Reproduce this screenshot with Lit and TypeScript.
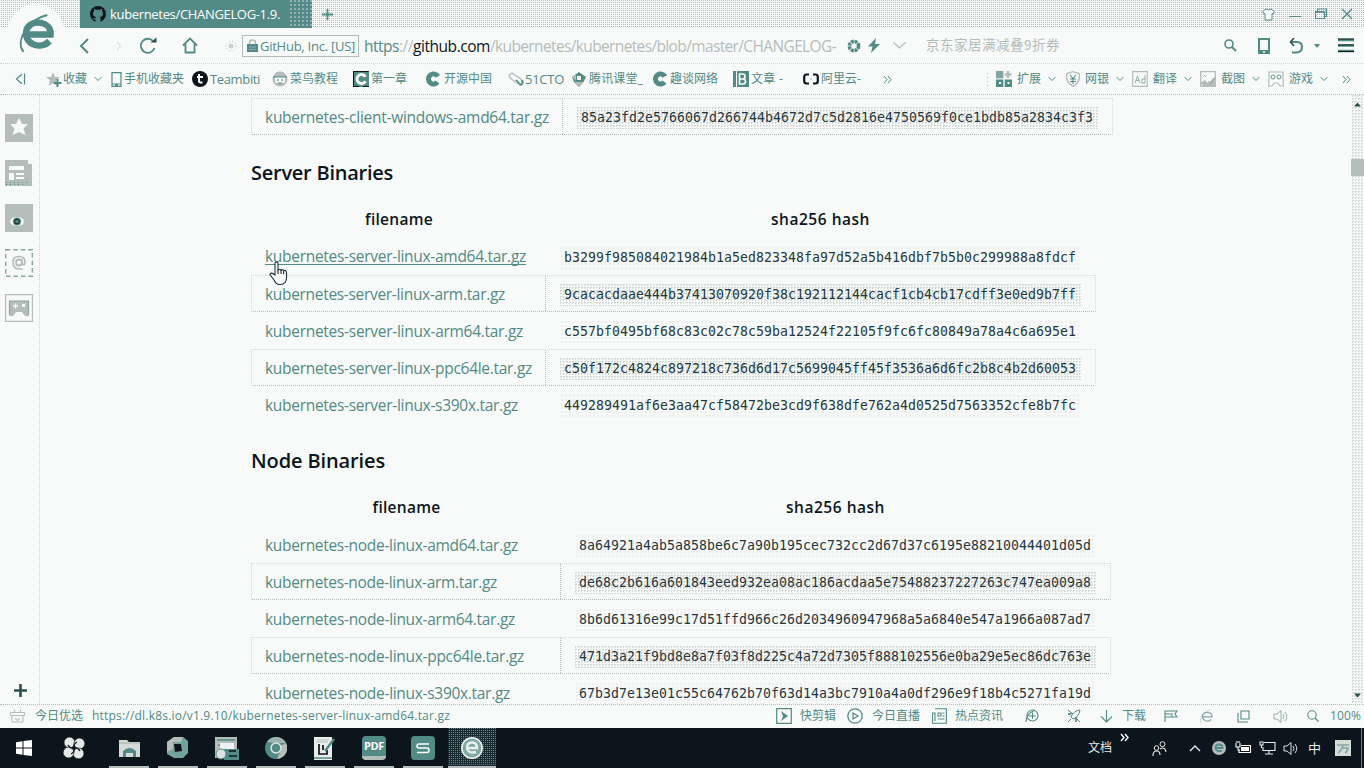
import { LitElement, html, css, svg, unsafeCSS, TemplateResult } from "lit";
import { customElement, property } from "lit/decorators.js";

const BG = "#f8faf9";
const G = "#b5bdba";
const T = "#528a85";
const D = "#0c151c";

/* Turns a list of x edges into grid tracks, the last edge being 1364. */
const tracks = (edges: number[]) =>
  unsafeCSS([...edges, 1364].slice(1).map((e, i) => `${e - edges[i]}px`).join(" "));

const icon = (w: number, h: number, body: unknown) =>
  html`<svg width=${w} height=${h} viewBox="0 0 ${w} ${h}" fill="none">${body}</svg>`;

const line = (d: string, c = T, w = 1.5) => svg`<path d=${d} stroke=${c} stroke-width=${w}></path>`;
const fill = (d: string, c = T) => svg`<path d=${d} fill=${c}></path>`;
const fit = (w: number, text: string, cls = "") => html`<fit-text class=${cls} .w=${w} .text=${text}></fit-text>`;

/* A single line of text whose tracking is adjusted to a given width. */
@customElement("fit-text")
class FitText extends LitElement {
  @property({ type: Number }) w = 0;
  @property() text = "";
  static styles = css`
    :host { display: inline-block; white-space: pre; justify-self: start; }
  `;
  firstUpdated() {
    const run = this.renderRoot.querySelector("span")!;
    const natural = run.getBoundingClientRect().width;
    run.style.letterSpacing = `${(this.w - natural) / this.text.length}px`;
  }
  render() {
    return html`<span>${this.text}</span>`;
  }
}

const chev = icon(8, 6, line("M.5 1 4 4.5 7.5 1", T, 1));
const more = (c = T, w = 1) => icon(9, 9, line("M1 1 4 4.5 1 8M5 1 8 4.5 5 8", c, w));
const eLogo = (s: number, c = T, stroke = 5) => html`<svg width=${s} height=${s} viewBox="0 0 36 36" fill="none">
  <path d="M7 19H31C32 7 14 4 9 14C5 27 21 34 30 25" stroke=${c} stroke-width=${stroke}></path>
  <path d="M28 1C10 5-2 25 6 35" stroke=${c} stroke-width=${stroke / 3.2}></path></svg>`;
const speaker = (c: string) => icon(16, 15, svg`${line("M1 5H4L8 1.5V13.5L4 10H1Z", c, 1)}${line("M10 5Q12 7.5 10 10M12 3Q15.5 7.5 12 12", c, 1)}`);
const cIcon = icon(16, 16, svg`<circle cx="7.5" cy="8" r="5" stroke=${T} stroke-width="5" stroke-dasharray="25 6.4" transform="rotate(37 7.5 8)"></circle>`);

const server: [number, string, string][] = [
  [261, "kubernetes-server-linux-amd64.tar.gz", "b3299f985084021984b1a5ed823348fa97d52a5b416dbf7b5b0c299988a8fdcf"],
  [240, "kubernetes-server-linux-arm.tar.gz", "9cacacdaae444b37413070920f38c192112144cacf1cb4cb17cdff3e0ed9b7ff"],
  [258, "kubernetes-server-linux-arm64.tar.gz", "c557bf0495bf68c83c02c78c59ba12524f22105f9fc6fc80849a78a4c6a695e1"],
  [267, "kubernetes-server-linux-ppc64le.tar.gz", "c50f172c4824c897218c736d6d17c5699045ff45f3536a6d6fc2b8c4b2d60053"],
  [253, "kubernetes-server-linux-s390x.tar.gz", "449289491af6e3aa47cf58472be3cd9f638dfe762a4d0525d7563352cfe8b7fc"],
];
const node: [number, string, string][] = [
  [253, "kubernetes-node-linux-amd64.tar.gz", "8a64921a4ab5a858be6c7a90b195cec732cc2d67d37c6195e88210044401d05d"],
  [232, "kubernetes-node-linux-arm.tar.gz", "de68c2b616a601843eed932ea08ac186acdaa5e75488237227263c747ea009a8"],
  [250, "kubernetes-node-linux-arm64.tar.gz", "8b6d61316e99c17d51ffd966c26d2034960947968a5a6840e547a1966a087ad7"],
  [259, "kubernetes-node-linux-ppc64le.tar.gz", "471d3a21f9bd8e8a7f03f8d225c4a72d7305f888102556e0ba29e5ec86dc763e"],
  [245, "kubernetes-node-linux-s390x.tar.gz", "67b3d7e13e01c55c64762b70f63d14a3bc7910a4a0df296e9f18b4c5271fa19d"],
];

@customElement("app-root")
class AppRoot extends LitElement {
  static styles = css`
    :host { display: grid; grid-template-rows: 28px 36px 31px 609px 24px 40px; width: 1364px; height: 768px;
      position: relative; overflow: hidden; background: ${unsafeCSS(BG)}; color: ${unsafeCSS(T)};
      font: 12px/16px "Open Sans", "Noto Sans CJK SC", sans-serif; }
    * { box-sizing: border-box; }
    svg { display: block; flex: none; }
    .grid { display: grid; align-items: center; min-width: 0; }
    .grid > * { min-width: 0; }
    .grey { color: ${unsafeCSS(G)}; }
    .dark { color: ${unsafeCSS(D)}; }
    .cjk { font-family: "Noto Sans CJK SC", sans-serif; }

    .title { grid-template-columns: ${tracks([0, 80, 322, 1262, 1289, 1315, 1341])};
      background: conic-gradient(${unsafeCSS(G)} 25%, transparent 0) 0 0 / 2px 2px; }
    .tab { width: 232px; height: 28px; display: flex; align-items: center; gap: 4px; padding-left: 10px;
      background: ${unsafeCSS(T)}; color: #fff; }
    .tab-end { width: 24px; height: 28px; margin-left: auto;
      background: conic-gradient(#93b0ac 25%, transparent 0) 0 0 / 4px 4px; }
    .tab fit-text { font-size: 13px; margin-top: -1px; }
    .logo { position: absolute; left: 7px; top: 4px; width: 58px; height: 58px; border-radius: 50%;
      background: ${unsafeCSS(BG)}; display: grid; place-items: center; }

    .nav { grid-template-columns: ${tracks([0, 79, 116, 140, 182, 225, 242, 364, 847, 868, 893, 926, 1224, 1258, 1289, 1314, 1338])};
      border-bottom: 1px dotted #cdd3d1; }
    .cert { width: 117px; height: 22px; border: 1px solid ${unsafeCSS(G)}; display: flex; align-items: center;
      padding-left: 4px; gap: 2px; font-size: 13px; }
    .url { display: flex; font-size: 15.5px; line-height: 22px; }
    .hint { font-size: 13.5px; margin-top: -3px; }

    .marks { grid-template-columns: ${tracks([0, 15, 46, 63, 94, 111, 124, 192, 210, 272, 290, 353, 371, 426, 444, 508, 525, 572, 589, 653, 670, 733, 751, 803, 821, 883, 986, 996, 1017, 1048, 1065, 1085, 1116, 1132, 1153, 1184, 1200, 1221, 1252, 1268, 1289, 1320, 1342])};
      border-bottom: 1px dotted ${unsafeCSS(G)}; }
    .latin { font-size: 13px; }

    .body { display: grid; grid-template-columns: 40px 1311px 13px; min-height: 0; overflow: hidden; }
    .side { border-right: 1px dotted #cdd3d1; padding: 19px 0 7px 5px; display: flex; flex-direction: column; gap: 17px; }
    .side .add { margin: auto 0 0 9px; }
    .scroll { display: flex; flex-direction: column; align-items: center; padding: 7px 0 6px;
      background: conic-gradient(#d5dad8 25%, transparent 0) 0 0 / 3px 3px; }
    .thumb { width: 13px; height: 17px; margin-top: 52px; background: ${unsafeCSS(G)}; }
    .scroll .down { margin-top: auto; }

    .doc { overflow: hidden; padding: 3px 0 0 211px; min-height: 0; }
    .row { display: grid; height: 37px; align-items: center; border: 1px solid transparent; }
    .row.c { grid-template-columns: 311px 548px; width: 862px; }
    .row.s { grid-template-columns: 294px 549px; width: 845px; }
    .row.n { grid-template-columns: 309px 549px; width: 860px; }
    .row.alt { border: 1px dotted ${unsafeCSS(G)}; border-top-color: #d3d8d6; border-left-color: #d3d8d6; border-right-color: #d3d8d6; }
    .row > div { height: 35px; display: flex; align-items: center; }
    .name { padding-left: 13px; }
    .alt .name { border-right: 1px dotted ${unsafeCSS(G)}; }
    .name fit-text { font-size: 15.5px; line-height: 20px; }
    .hover fit-text { border-bottom: 1px solid ${unsafeCSS(T)}; line-height: 15px; height: 16px; margin-top: 1px; }
    .row > .hash { padding: 2px 0 0 13px; }
    code { font: 13.2px/22px "DejaVu Sans Mono", monospace; color: #24383e; height: 22px; padding: 0 5px;
      background: conic-gradient(#eceFed 25%, transparent 0) 0 0 / 4px 4px; }
    .alt code { background: conic-gradient(#d3d9d6 25%, transparent 0) 0 0 / 3px 3px; }
    h3 { margin: 0; height: 66px; padding-top: 25px; font-size: 20px; line-height: 26px; font-weight: 600; color: ${unsafeCSS(D)}; }
    .row > .th { justify-content: center; padding-bottom: 2px; font-size: 15.5px; font-weight: 600; color: ${unsafeCSS(D)}; }
    .cursor { position: absolute; left: 269px; top: 260px; }

    .status { grid-template-columns: ${tracks([0, 10, 35, 92, 776, 800, 847, 872, 932, 955, 1025, 1067, 1100, 1122, 1164, 1199, 1237, 1273, 1307, 1330])};
      border-top: 1px dotted ${unsafeCSS(G)}; padding-bottom: 1px; }
    .task { grid-template-columns: ${tracks([0, 16, 63, 109, 158, 207, 256, 305, 354, 403, 448, 1088, 1120, 1152, 1189, 1212, 1235, 1259, 1283, 1308, 1335, 1361])};
      background: ${unsafeCSS(D)}; color: #e6eceb; }
    .app { width: 40px; height: 40px; display: grid; place-items: center; border-bottom: 2px solid ${unsafeCSS(G)}; padding-top: 2px; }
    .app.on { width: 48px; background: conic-gradient(${unsafeCSS(T)} 25%, #182b31 0) 0 0 / 2px 2px; }
    .badge { width: 24px; height: 24px; border-radius: 4px; background: ${unsafeCSS(T)}; color: #fff; display: grid;
      place-items: center; font: 700 11px/20px "Open Sans", sans-serif; letter-spacing: -.3px; border-bottom: 4px solid ${unsafeCSS(G)}; }
    .raise { align-self: start; margin-top: 5px; }
    .ime { font-size: 13px; }
    .end { width: 1px; height: 40px; background: ${unsafeCSS(T)}; }
  `;

  private table(kind: string, rows: [number, string, string][]): TemplateResult {
    return html`
      <div class="row ${kind}">
        <div class="th">${fit(68, "filename")}</div>
        <div class="th">${fit(99, "sha256 hash")}</div>
      </div>
      ${rows.map((r, i) => this.row(kind, r, i % 2 === 1, kind === "s" && i === 0))}`;
  }

  private row(kind: string, [w, name, hash]: [number, string, string], alt: boolean, hover = false) {
    return html`<div class="row ${kind} ${alt ? "alt" : ""}">
      <div class="name ${hover ? "hover" : ""}">${fit(w, name)}</div>
      <div class="hash"><code>${fit(512, hash)}</code></div>
    </div>`;
  }

  render() {
    return html`
      <div class="grid title">
        <span></span>
        <div class="tab">
          ${icon(16, 16, svg`<circle cx="8" cy="8" r="8" fill=${D}></circle>${fill("M5.5 16V13.5Q2.5 14 2.5 11.5Q4 13 5.5 12L6 11Q3 10.5 3 7.5Q3 6 4 5V2.7L6 3.8H10L12 2.7V5Q13 6 13 7.5Q13 10.5 10 11L10.5 12.5V16Z", T)}`)}
          ${fit(170, "kubernetes/CHANGELOG-1.9.")}
          <div class="tab-end"></div>
        </div>
        ${icon(11, 11, line("M5.5 0V11M0 5.5H11", T, 1.8))}
        ${icon(13, 13, svg`<path d="M4 1Q6.5 3 9 1L12.5 3.5 11 6 10 5.5V12H3V5.5L2 6 .5 3.5Z" fill=${BG} stroke=${T}></path>`)}
        ${icon(12, 12, line("M0 8.5H12", T, 1))}
        ${icon(12, 12, svg`${line("M.5 4H9.5V10.5H.5ZM2.5 3.5V1H11.5V8.5H10", T, 1.2)}${line("M0 4H10", T, 1.6)}`)}
        ${icon(12, 12, line("M1 1 11 11M11 1 1 11", T, 1.3))}
      </div>

      <div class="grid nav">
        <span></span>
        ${icon(10, 16, line("M9 1 2 8 9 15", T, 2))}
        ${icon(6, 10, line("M1 1 4.5 5 1 9", "#cfd5d3", 1))}
        ${icon(17, 17, svg`${line("M14.5 11A7 7 0 1 1 13 4", T, 1.8)}${fill("M10.5 5.5H16.5V.5Z", "#2c5052")}`)}
        ${icon(16, 17, line("M1 8.5 8 1.5 15 8.5M3.5 7V15.5H12.5V7", T, 1.8))}
        ${icon(12, 12, svg`<circle cx="6" cy="6" r="2.5" fill="#cdd3d1"></circle><circle cx="6" cy="6" r="5" stroke=${G} stroke-dasharray="1 2"></circle>`)}
        <div class="cert">
          ${icon(11, 13, svg`${line("M2.5 6V3.5Q2.5 1 5.5 1T8.5 3.5V6", G, 1.6)}${fill("M0 5H11V13H0Z")}${line("M2 8H9M2 10.5H9", "#8db0ac", 1)}`)}
          ${fit(95, "GitHub, Inc. [US]")}
        </div>
        <div class="url">
          ${fit(35, "https")}${fit(14, "://", "grey")}${fit(77, "github.com", "dark")}${fit(346, "/kubernetes/kubernetes/blob/master/CHANGELOG-", "grey")}
        </div>
        ${icon(14, 14, svg`<circle cx="7" cy="7" r="4.6" stroke=${T} stroke-width="3.6" stroke-dasharray="2.9 .71"></circle>`)}
        ${icon(12, 15, fill("M8 0 0 8.5H4.5L3 15 12 6H7Z"))}
        ${icon(13, 7, line("M.5 .5 6.5 6 12.5 .5", G, 1.2))}
        ${fit(134, "京东家居满减叠9折券", "hint grey cjk")}
        ${icon(13, 13, svg`<circle cx="5" cy="5" r="4" stroke=${T} stroke-width="1.6"></circle>${line("M8 8 12 12", T, 2)}`)}
        ${icon(12, 16, svg`<path fill-rule="evenodd" d="M0 0H12V16H0ZM2 2V12H10V2ZM5 13.3V14.7H7V13.3Z" fill=${T}></path>`)}
        ${icon(15, 16, svg`${line("M2 4H8Q13 4 13 9T8 14.5H3", T, 2)}${line("M5 0 1.5 4 5 8", "#2c5052", 1.6)}`)}
        ${icon(6, 4, fill("M0 0H6L3 4Z"))}
        ${icon(16, 15, svg`${line("M0 2H16M0 7.5H16M0 13H16", T, 2.6)}${line("M0 1H16M0 7H16M0 13.5H16", D, 1)}`)}
      </div>
      <div class="logo">${eLogo(39, T, 6)}</div>

      <div class="grid marks">
        <span></span>
        ${icon(11, 12, line("M7 1 1.5 6 7 11M9.5 .5V11.5", T, 1.2))}
        ${icon(16, 15, svg`${fill("M7 0 9 5H14L10 8.5 11.5 14 7 11 2.5 14 4 8.5 0 5H5Z", G)}${line("M11.5 7V15M7.5 11H15.5", T, 2)}`)}
        ${fit(24, "收藏")} ${chev}
        ${icon(11, 15, svg`${line("M1 .7H10V14.3H1Z", T, 1.2)}${line("M1 12H10", T, 1)}${fill("M4 12H7V14H4Z")}`)}
        ${fit(60, "手机收藏夹")}
        ${icon(16, 16, svg`<circle cx="8" cy="8" r="8" fill=${D}></circle>${line("M7 3V10Q7 12 10.5 11.5M5 6H11", BG, 2)}`)}
        ${fit(50, "Teambiti", "latin")}
        ${icon(16, 16, svg`<circle cx="8" cy="8" r="7.5" fill=${G}></circle>${fill("M3 6H13V12H3Z", BG)}${line("M1 6H15M5 9H7M9 9H11M6 12H10", T, 1.2)}`)}
        ${fit(48, "菜鸟教程")}
        ${icon(16, 16, svg`${fill("M0 0H16V16H0Z")}<circle cx="8.5" cy="8" r="4.5" stroke=${BG} stroke-width="3" stroke-dasharray="23 5.3" transform="rotate(30 8.5 8)"></circle>${line("M.5 .5H15.5M.5 0V16M1 15.5H6M10 15.5H16", D, 1)}`)}
        ${fit(36, "第一章")}
        ${cIcon} ${fit(48, "开源中国")}
        ${icon(16, 15, svg`${line("M1 3 4 1 13 7Q15 11 12 13L2 6Z", G, 1.3)}${line("M8 8 13 13Q16 11 14 8", T, 1.6)}`)}
        ${fit(39, "51CTO", "latin")}
        ${icon(14, 15, svg`${fill("M7 0 14 5 12 9 7 15 2 10 0 5Z")}${fill("M0 5 4 2V9ZM2 10H12L7 15Z", G)}${fill("M5 4H9V8H5Z", BG)}`)}
        ${fit(54, "腾讯课堂_")}
        ${cIcon} ${fit(48, "趣谈网络")}
        ${icon(16, 16, svg`${fill("M0 0H16V16H0Z")}${line("M3.5 0V16", BG, 1)}${line("M6.5 3H10Q12 3 12 5.5T10 8Q12.5 8 12.5 10.5T10 13H6.5ZM6.5 8H10", BG, 1.7)}`)}
        ${fit(32, "文章 -")}
        ${icon(16, 12, svg`${line("M6 1.5H3.5Q1.2 1.5 1.2 4V8Q1.2 10.5 3.5 10.5H6M10 1.5H12.5Q14.8 1.5 14.8 4V8Q14.8 10.5 12.5 10.5H10", D, 2.2)}${line("M7 6H9", G, 1)}`)}
        ${fit(40, "阿里云-")}
        ${more()}
        ${icon(3, 15, svg`<path d="M1.5 1V14" stroke=${G} stroke-dasharray="1 3"></path>`)}
        ${icon(16, 16, svg`${fill("M0 8.5H7.3V16H0ZM8.7 8.5H16V16H8.7Z")}${fill("M0 0H7.3V7.3H0Z", "#82a5a1")}${line("M12 0V7M8.7 3.5H15.5", G, 2.6)}${fill("M3 11H5V13H3ZM11.5 11H13.5V13H11.5Z", BG)}`)}
        ${fit(24, "扩展")} ${chev}
        ${icon(16, 16, svg`${line("M8 .7 14 2.5Q16 11 8 15.3Q0 11 2 2.5Z", G, 1.4)}${line("M5 4 8 7.5 11 4M5 8H11M5 10.5H11M8 7V13", T, 1.1)}`)}
        ${fit(24, "网银")} ${chev}
        ${icon(16, 16, svg`${line("M.7 .7H15.3V15.3H.7Z", G, 1.2)}${line("M3 12 5.5 5 8 12M4 9.5H7M13 4V12H10V8H13", "#86a7a3", .9)}`)}
        ${fit(24, "翻译")} ${chev}
        ${icon(16, 16, svg`${line("M.7 .7H15.3V15.3H.7Z", G, 1.3)}${fill("M0 12 5 9 8 12 16 5V16H4Z", G)}${line("M4 4 6 6M8 10 11 13 14 7", "#86a7a3", 1)}`)}
        ${fit(24, "截图")} ${chev}
        ${icon(16, 16, svg`${line("M1 1H15L15.3 15H12L10 12H6L4 15H.7Z", G, 1.2)}<circle cx="5" cy="6" r="2" stroke=${T} stroke-width=".9"></circle><circle cx="11" cy="6" r="2" stroke=${T} stroke-width=".9"></circle>`)}
        ${fit(24, "游戏")} ${chev} ${more()}
      </div>

      <div class="body">
        <div class="side">
          ${icon(28, 28, svg`${fill("M0 0H28V28H0Z", G)}${fill("M14 4 17 10H23L18.5 14.5 20.5 21 14 18 7.5 21 9.5 14.5 5 10H11Z", BG)}`)}
          ${icon(28, 28, svg`${fill("M0 1H23V5H27V27H0Z", G)}${fill("M4 7H19V11H4ZM4 14H9V21H4ZM11 14H19V16H11ZM11 18H19V20H11Z", BG)}<path d="M1 23.5H22M1 25.5H20" stroke=${T} stroke-dasharray="1 3"></path>`)}
          ${icon(28, 28, svg`${fill("M0 0H28V28H0Z", G)}<ellipse cx="12" cy="17.5" rx="7" ry="4.5" fill=${BG}></ellipse><circle cx="12" cy="17.5" r="4" fill=${T}></circle><circle cx="12" cy="17.5" r="2.4" stroke=${D}></circle>`)}
          ${icon(28, 28, svg`<path d="M.7 .7H27.3V27.3H.7Z" stroke="#86a7a3" stroke-width="1.4" stroke-dasharray="4.5 3"></path><circle cx="14" cy="13.5" r="3" stroke=${G} stroke-width="1.8"></circle>${line("M17 10V15Q20 17 20 13Q20 7.5 14 7.5T8 13.5T14 20H18", G, 1.7)}`)}
          ${icon(28, 28, svg`${line("M.6 .6H27.4V27.4H.6Z", G, 1.2)}${fill("M4 7H24V22H20L17 18H11L8 22H4Z", G)}${line("M4.5 20V7H23.5V20", "#86a7a3", 1.2)}${line("M8 12H13M10.5 9.5V14.5", BG, 1.3)}${fill("M17 10H20V13H17Z", BG)}`)}
          <div class="add">${icon(13, 13, line("M6.5 0V13M0 6.5H13", "#2c5052", 2.6))}</div>
        </div>
        <div class="doc">
          ${this.row("c", [284, "kubernetes-client-windows-amd64.tar.gz", "85a23fd2e5766067d266744b4672d7c5d2816e4750569f0ce1bdb85a2834c3f3"], true)}
          <h3>${fit(142, "Server Binaries")}</h3>
          ${this.table("s", server)}
          <h3>${fit(134, "Node Binaries")}</h3>
          ${this.table("n", node)}
        </div>
        <div class="scroll">
          ${icon(7, 5, fill("M0 4.5H7L3.5 .5Z", "#2c5052"))}
          <div class="thumb"></div>
          <div class="down">${icon(7, 5, fill("M0 .5H7L3.5 4.5Z", "#2c5052"))}</div>
        </div>
      </div>
      <svg class="cursor" width="19" height="26" viewBox="0 0 19 26" fill=${BG}>
        <path d="M6 15V3Q7.5 1 9 3V10Q10.5 8.5 12 10Q13.5 9 14.5 10.5Q17.5 10 17.5 12.5V18Q17 24.5 11.5 24.5Q7 25 5 20L1 14.5Q1.5 11.5 6 15Z" stroke="#1d3339" stroke-width="1.1"></path>
        <path d="M9 10V14M12 10V14M14.6 11V14" stroke=${D}></path>
      </svg>

      <div class="grid status">
        <span></span>
        ${icon(15, 14, line("M.5 3.5H14.5V6.5H.5ZM2 7V13H13V7M5 3 4 .5M10 3 11 .5M6 9V11H9V9", G, 1))}
        ${fit(48, "今日优选")}
        ${fit(358, "https://dl.k8s.io/v1.9.10/kubernetes-server-linux-amd64.tar.gz")}
        ${icon(16, 16, svg`${line("M.7 .7H15.3V15.3H.7Z", T, 1.2)}${fill("M5 3 12 8 5 13 7 8.5Z")}`)}
        ${fit(36, "快剪辑")}
        ${icon(16, 16, svg`<circle cx="8" cy="8" r="7.2" stroke=${T} stroke-width="1.3"></circle>${line("M6 5 11 8 6 11Z", T, 1.2)}`)}
        ${fit(48, "今日直播")}
        ${icon(15, 16, line("M3 .7H14.4V15.3H.6V5H3V13M6 5H9V8H6ZM10.5 5H12.5M10.5 8H12.5M6 11H12.5", T, 1.1))}
        ${fit(48, "热点资讯")}
        ${icon(14, 14, svg`<circle cx="7.5" cy="6.5" r="5.5" stroke=${T} stroke-width="1.1"></circle>${line("M1 13Q1 5 10 1M4 7H11M7.5 3.5V10", T, 1.1)}`)}
        ${icon(14, 14, line("M4 8Q6 2 13 1Q12 8 6 10ZM4 6 1 5 5 4M8 9 9 13 10 8M4 10 1 13M1 1 6 5M8 8 13 13", T, 1))}
        ${icon(13, 13, line("M6.5 0V12M1 6.5 6.5 12 12 6.5", T, 1.1))}
        ${fit(24, "下载")}
        ${icon(14, 12, line("M1 12V1H13L11 4 13 7H8V4H1M1 7H8", T, 1.1))}
        ${eLogo(15, "#86a7a3", 3)}
        ${icon(13, 13, line("M4 1H12V9H4ZM1 3V12H11", T, 1.1))}
        ${speaker("#93aca8")}
        ${icon(12, 12, svg`<circle cx="5" cy="5" r="4.2" stroke=${T} stroke-width="1.1"></circle>${line("M8 8 11.5 11.5", T, 1.2)}`)}
        ${fit(31, "100%")}
      </div>

      <div class="grid task">
        <span></span>
        ${icon(16, 16, fill("M0 2.2 6.5 1.2V7.5H0ZM7.5 1 16 0V7.5H7.5ZM0 8.5H6.5V14.8L0 13.8ZM7.5 8.5H16V16L7.5 15Z", "#fff"))}
        ${icon(22, 22, svg`<g fill="#e4e9e7" stroke=${D} stroke-width=".6"><circle cx="6.5" cy="5.5" r="5.4"></circle><circle cx="16.4" cy="6.5" r="5.4"></circle><circle cx="15.5" cy="16.4" r="5.4"></circle><circle cx="5.6" cy="15.5" r="5.4"></circle></g>${line("M11 11Q7 12 5 8M11 11Q10 7 14 5M11 11Q15 10 17 14M11 11Q12 15 8 17", D, 1.3)}`)}
        <div class="app">${icon(21, 19, svg`${fill("M0 1H8L10 3H21V18H0Z", "#d4dad7")}${line("M0 4H21", G, 1.5)}${fill("M4 18V12Q10.5 6 17 12V18H14V14H7V18Z")}`)}</div>
        <div class="app">${icon(22, 22, svg`${fill("M7 0H16L21 4V16L16 21H7L0 17V5Z", "#74a29d")}${fill("M0 5 7 0H16L14 5H6V12L0 15Z", G)}${fill("M7 7H14L15 14 8 15Z", D)}`)}</div>
        <div class="app">${icon(24, 23, svg`${fill("M0 0H22V21H0Z", G)}${line("M2 3H20M3 8H18", T, 1.5)}${fill("M5 6H19V12H5Z", "#eef2f0")}${fill("M9 12H24V23H9Z")}<circle cx="6" cy="17" r="5" fill="#dce2df" stroke=${T}></circle>${line("M14 14H21M14 19H22", D, 1.3)}`)}</div>
        <div class="app">${icon(22, 22, svg`<circle cx="11" cy="11" r="11" fill=${T}></circle>${fill("M11 11 21 6A11 11 0 0 1 12 22L16 13Z", G)}${fill("M2 5A11 11 0 0 1 21 6H11Z", "#9db5b1")}<circle cx="11" cy="11" r="5" fill=${T} stroke="#e1e6e4" stroke-width="1.5"></circle>`)}</div>
        <div class="app">${icon(22, 23, svg`${fill("M0 0H18V23H0Z", "#e9eeec")}${line("M3 3H15M2 5H14", G, 1)}${line("M5 7V17H13V13M9 8V13", D, 1.7)}${line("M11 14 20 2", T, 2.4)}${line("M0 21H18", T, 1.5)}`)}</div>
        <div class="app"><div class="badge">PDF</div></div>
        <div class="app">${icon(24, 24, svg`<rect width="24" height="24" rx="4" fill=${T}></rect>${line("M18 8H8Q6 8 6 10T8 12H16Q18 12 18 14.2T16 16.5H6", "#fff", 1.5)}`)}</div>
        <div class="app on">${icon(22, 22, svg`<circle cx="11" cy="11" r="10.2" fill="#82aaa5" stroke="#f4f7f6" stroke-width="1.5"></circle>${line("M6 11H16Q16 5.5 11 5.5T6 11Q7 17 15 15", "#eaf0ee", 2.4)}`)}</div>
        ${fit(24, "文档")}
        <div class="raise">${more("#fff", 1.4)}</div>
        ${icon(15, 15, svg`<circle cx="4.5" cy="7" r="2.3" stroke="#dfe6e4"></circle><circle cx="10.5" cy="3.2" r="2.5" stroke="#dfe6e4"></circle>${line("M1 15Q1 10 4.5 10T8 14M8 8Q13 5 14 11", "#dfe6e4", 1.2)}`)}
        ${icon(12, 7, line("M1 6 6 1 11 6", "#e9efed", 1.4))}
        ${icon(14, 14, svg`<circle cx="7" cy="7" r="7" fill=${G}></circle>${line("M3.5 7H10.5Q10.5 3.5 7 3.5T3.5 7Q4 11 10 10", T, 1.8)}`)}
        ${icon(17, 14, svg`${line("M6 4.5H15.5V11.5H4V9M1 2V6H5V2M3 6V9H5M2 0V2M4 0V2", "#fff", 1.1)}${fill("M6 6H14V10H6Z", "#fff")}`)}
        ${icon(17, 14, line("M5 1.5H16V9.5H4V6M10 10V13M6 13H14M1 1H4V4H1ZM2.5 4V7", "#e6eceb", 1.1))}
        ${speaker("#d9e1df")}
        ${fit(13, "中", "ime")}
        ${icon(16, 16, svg`${fill("M0 0H16V16H0Z", "#d5dbd9")}${line("M2 5H14M8 5Q7 10 3 13M6 8H13Q12 12 10 13", "#87a29f", 1.5)}`)}
        <div class="end"></div>
      </div>
    `;
  }
}
